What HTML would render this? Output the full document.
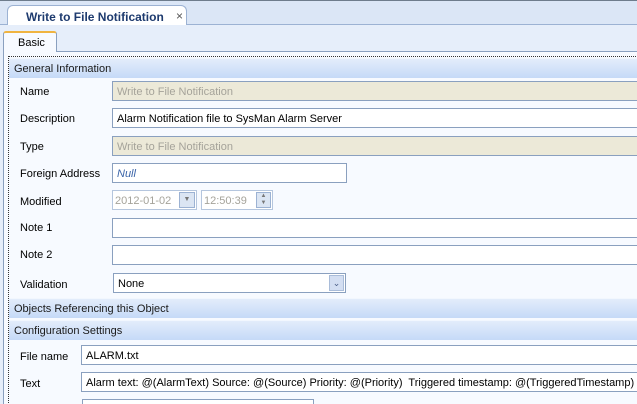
<!DOCTYPE html><html><head><style>
html,body{margin:0;width:637px;height:404px;overflow:hidden}
body{background:#fff;font-family:"Liberation Sans",sans-serif;font-size:11px;color:#000;position:relative}
.a{position:absolute}
.f{position:absolute;border:1px solid #8aa0bf;background:#fff;box-sizing:border-box;height:20px;padding:4px 4px 0;white-space:nowrap;overflow:hidden}
.ro{background:#ece9d8;color:#a5a39a}
.l{position:absolute;left:20px}
.h{position:absolute;left:9px;width:628px;height:20px;background:linear-gradient(#e3edfb,#c5daf7);border-top:1px solid #f2f7fe;box-sizing:border-box;padding:4px 5px 0;color:#1a1a1a}
</style></head><body>
<div class="a" style="left:0;top:0;width:637px;height:26px;background:#dbe6f6;border-top:1px solid #6e7c8c;box-sizing:border-box"></div>
<div class="a" style="left:0;top:24px;width:637px;height:1px;background:#9cb2d3"></div>
<div class="a" style="left:7px;top:5px;width:180px;height:20px;background:#fff;border:1px solid #9cb2d3;border-bottom:none;border-radius:6px 6px 0 0;font-weight:bold;color:#1d3a6e;font-size:12px;padding:4px 0 0 18px;box-sizing:border-box">Write to File Notification<span style="position:absolute;left:168px;top:3px;font-weight:normal;color:#555">×</span></div>
<div class="a" style="left:0;top:25px;width:637px;height:379px;background:#e6eefa"></div>
<div class="a" style="left:3px;top:51px;width:634px;height:353px;background:#f7faff;border-left:1px solid #8aa0bf;border-top:1px solid #8aa0bf"></div>
<div class="a" style="left:3px;top:31px;width:54px;height:21px;background:#f7faff;border:1px solid #8aa0bf;border-bottom:none;border-top:2px solid #f0b440;border-radius:3px 3px 0 0;box-sizing:border-box;padding:4px 0 0 14px">Basic</div>
<div class="a" style="left:8px;top:56px;width:629px;height:348px;border-left:1px dotted #333;border-top:1px dotted #333"></div>
<div class="h" style="top:58px">General Information</div>
<div class="l" style="top:86px">Name</div><div class="f ro" style="left:112px;top:81px;width:530px">Write to File Notification</div>
<div class="l" style="top:113px">Description</div><div class="f" style="left:112px;top:108px;width:530px">Alarm Notification file to SysMan Alarm Server</div>
<div class="l" style="top:141px">Type</div><div class="f ro" style="left:112px;top:136px;width:530px">Write to File Notification</div>
<div class="l" style="top:168px">Foreign Address</div><div class="f" style="left:112px;top:163px;width:235px;color:#3a64a8;font-style:italic">Null</div>
<div class="l" style="top:196px">Modified</div>
<div class="f" style="left:112px;top:190px;width:85px;border-color:#b5c6de;color:#a5a39a;padding:4px 2px 0">2012-01-02</div>
<div class="a" style="left:179px;top:192px;width:16px;height:16px;background:#dbe5f3;border:1px solid #9cb2d3;box-sizing:border-box;font-size:7px;color:#777;text-align:center;line-height:14px">▼</div>
<div class="f" style="left:201px;top:190px;width:72px;border-color:#b5c6de;color:#a5a39a;padding:4px 2px 0">12:50:39</div>
<div class="a" style="left:256px;top:192px;width:15px;height:16px;background:#dbe5f3;border:1px solid #9cb2d3;box-sizing:border-box;font-size:6px;color:#777;text-align:center;line-height:7px">▲<br>▼</div>
<div class="l" style="top:222px">Note 1</div><div class="f" style="left:112px;top:218px;width:530px"></div>
<div class="l" style="top:249px">Note 2</div><div class="f" style="left:112px;top:245px;width:530px"></div>
<div class="l" style="top:279px">Validation</div><div class="f" style="left:113px;top:273px;width:233px">None</div>
<div class="a" style="left:329px;top:275px;width:15px;height:16px;background:#d3def2;border:1px solid #a9bcd9;box-sizing:border-box;color:#4a5d86;font-size:9px;text-align:center;line-height:14px">⌄</div>
<div class="h" style="top:298px">Objects Referencing this Object</div>
<div class="h" style="top:320px">Configuration Settings</div>
<div class="l" style="top:351px">File name</div><div class="f" style="left:81px;top:345px;width:560px">ALARM.txt</div>
<div class="l" style="top:378px">Text</div><div class="f" style="left:81px;top:372px;width:560px">Alarm text: @(AlarmText) Source: @(Source) Priority: @(Priority)&nbsp; Triggered timestamp: @(TriggeredTimestamp)</div>
<div class="f" style="left:82px;top:399px;width:232px;height:5px"></div>
</body></html>
